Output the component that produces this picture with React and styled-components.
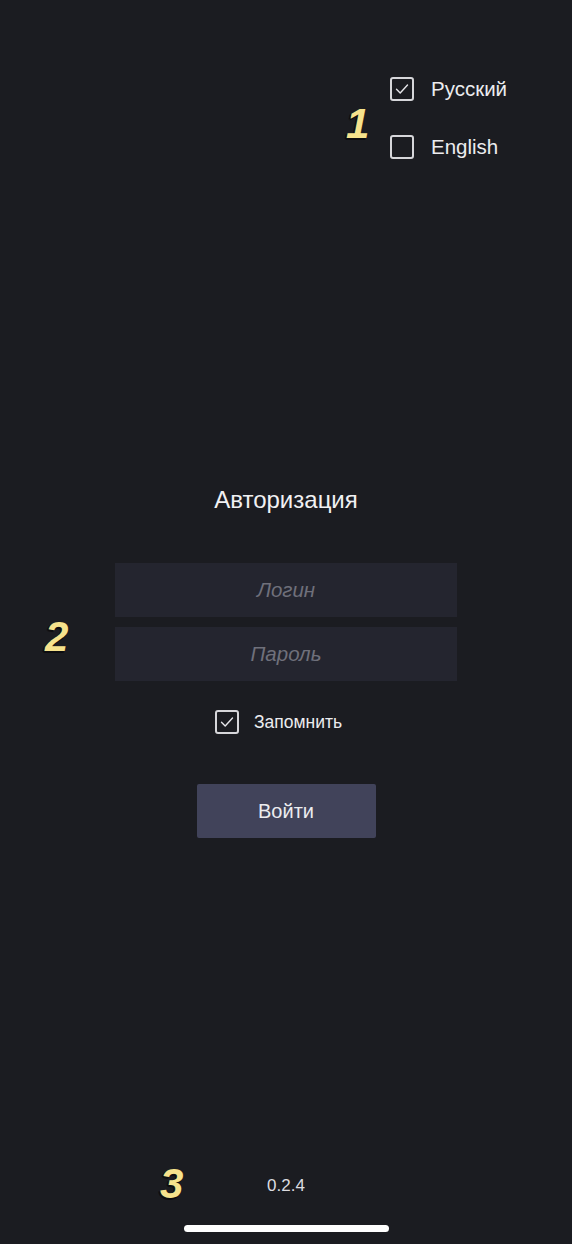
import React from "react";
import styled, { createGlobalStyle } from "styled-components";

const Global = createGlobalStyle`
  html, body { margin: 0; padding: 0; background: #1b1c21; }
  body { font-family: "Liberation Sans", Arial, sans-serif; }
  * { box-sizing: border-box; }
`;

const Page = styled.div`
  position: relative;
  width: 572px;
  height: 1244px;
  background: #1b1c21;
  display: flex;
  flex-direction: column;
  align-items: center;
  color: #e9e9ec;
  overflow: hidden;
`;

const LangList = styled.div`
  align-self: stretch;
  display: flex;
  flex-direction: column;
  align-items: flex-start;
  gap: 34px;
  padding: 77px 0 0 390px;
`;

const CheckRow = styled.label`
  display: flex;
  align-items: center;
  gap: ${(p) => p.$gap}px;
  height: 24px;
  font-size: ${(p) => p.$size}px;
  color: #ececef;
`;

const Box = styled.span`
  width: 24px;
  height: 24px;
  border: 2px solid #d6d6da;
  border-radius: 3px;
  display: flex;
  align-items: center;
  justify-content: center;
  flex-shrink: 0;
`;

const Title = styled.h1`
  margin: 327px 0 0;
  font-size: 24px;
  line-height: 28px;
  font-weight: 400;
  color: #f1f1f3;
`;

const Fields = styled.div`
  margin-top: 49px;
  display: flex;
  flex-direction: column;
  gap: 10px;
`;

const Field = styled.input`
  width: 342px;
  height: 54px;
  border: none;
  outline: none;
  background: #24252f;
  text-align: center;
  font-family: "Liberation Sans", Arial, sans-serif;
  font-size: 20.5px;
  color: #e9e9ec;
  &::placeholder {
    color: #6f707b;
    font-style: italic;
  }
`;

const Remember = styled.div`
  margin: 29px 15px 0 0;
`;

const Button = styled.button`
  margin-top: 50px;
  width: 179px;
  height: 54px;
  border: none;
  border-radius: 2px;
  background: #41435a;
  color: #ececef;
  font-family: "Liberation Sans", Arial, sans-serif;
  font-size: 20px;
`;

const Version = styled.div`
  margin-top: auto;
  font-size: 17px;
  line-height: 20px;
  color: #dcdce0;
`;

const HomeBar = styled.div`
  margin: 29px 0 12px;
  width: 205px;
  height: 7px;
  border-radius: 4px;
  background: #ffffff;
`;

const Mark = styled.span`
  position: absolute;
  left: ${(p) => p.$x}px;
  top: ${(p) => p.$y}px;
  font-family: "Liberation Sans", Arial, sans-serif;
  font-weight: 700;
  font-style: italic;
  font-size: 42px;
  line-height: 42px;
  color: #f6e28c;
  text-shadow: -2px 1px 0 #0d0d10, -1px 2px 0 #0d0d10;
`;

const Check = () => (
  <svg width="16" height="16" viewBox="0 0 16 16" fill="none">
    <path d="M2.5 8.3 L6.2 12 L13.5 4" stroke="#e6e6ea" strokeWidth="1.4" strokeLinecap="round" strokeLinejoin="round" />
  </svg>
);

const CheckItem = ({ checked, label, size = 20.5, gap = 17 }) => (
  <CheckRow $size={size} $gap={gap}>
    <Box>{checked && <Check />}</Box>
    <span>{label}</span>
  </CheckRow>
);

export default function App() {
  return (
    <>
      <Global />
      <Page>
        <LangList>
          <CheckItem checked label="Русский" />
          <CheckItem label="English" />
        </LangList>
        <Title>Авторизация</Title>
        <Fields>
          <Field placeholder="Логин" />
          <Field placeholder="Пароль" type="password" />
        </Fields>
        <Remember>
          <CheckItem checked label="Запомнить" size={17.5} gap={15} />
        </Remember>
        <Button>Войти</Button>
        <Version>0.2.4</Version>
        <HomeBar />
        <Mark $x={346} $y={103}>1</Mark>
        <Mark $x={45} $y={616}>2</Mark>
        <Mark $x={160} $y={1163}>3</Mark>
      </Page>
    </>
  );
}
